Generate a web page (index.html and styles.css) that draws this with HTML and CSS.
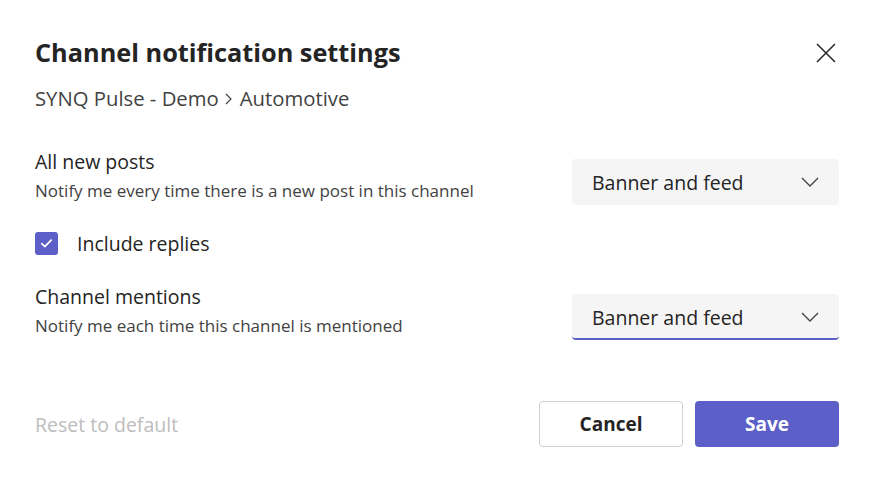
FILE: index.html
```html
<!DOCTYPE html>
<html>
<head>
<meta charset="utf-8">
<link rel="stylesheet" href="styles.css">
</head>
<body>
<div class="dialog">
  <div class="header">
    <h1 class="title">Channel notification settings</h1>
    <button class="close" aria-label="Close">
      <svg width="20" height="20" viewBox="0 0 20 20"><path d="M1 1 L19 19 M19 1 L1 19" stroke="#242424" stroke-width="1.5" fill="none"/></svg>
    </button>
  </div>
  <div class="crumb">SYNQ Pulse - Demo<svg class="sep" width="7" height="12" viewBox="0 0 7 12"><path d="M1 1 L6 6 L1 11" stroke="#424242" stroke-width="1.2" fill="none"/></svg>Automotive</div>

  <div class="setting first">
    <div class="setting-text">
      <div class="label">All new posts</div>
      <div class="desc">Notify me every time there is a new post in this channel</div>
    </div>
    <div class="select">
      <span>Banner and feed</span>
      <svg class="chev" width="18" height="10" viewBox="0 0 18 10"><path d="M1 1 L9 9 L17 1" stroke="#424242" stroke-width="1.3" fill="none"/></svg>
    </div>
  </div>

  <label class="check-row">
    <span class="checkbox">
      <svg width="13" height="11" viewBox="0 0 13 11"><path d="M1.8 5.6 L4.8 8.6 L11.2 2.2" stroke="#fff" stroke-width="1.8" fill="none" stroke-linecap="round" stroke-linejoin="round"/></svg>
    </span>
    <span class="check-label">Include replies</span>
  </label>

  <div class="setting second">
    <div class="setting-text">
      <div class="label">Channel mentions</div>
      <div class="desc">Notify me each time this channel is mentioned</div>
    </div>
    <div class="select focused">
      <span>Banner and feed</span>
      <svg class="chev" width="18" height="10" viewBox="0 0 18 10"><path d="M1 1 L9 9 L17 1" stroke="#424242" stroke-width="1.3" fill="none"/></svg>
    </div>
  </div>

  <div class="footer">
    <span class="reset">Reset to default</span>
    <div class="actions">
      <button class="btn cancel">Cancel</button>
      <button class="btn save">Save</button>
    </div>
  </div>
</div>
</body>
</html>
```
FILE: styles.css
```css
* { box-sizing: border-box; }
html, body { margin: 0; padding: 0; background: #fff; }
body {
  font-family: "Open Sans", "Noto Sans", sans-serif;
  color: #242424;
  width: 876px;
  height: 487px;
  overflow: hidden;
}
.dialog {
  padding: 36px 37px 0 35px;
}
.header {
  display: flex;
  justify-content: space-between;
  align-items: center;
  height: 32px;
}
.title {
  margin: 0;
  font-size: 25.3px;
  line-height: 32px;
  font-weight: 700;
}
.close {
  border: 0;
  background: none;
  padding: 0;
  width: 20px;
  height: 20px;
  margin-right: 3px;
  margin-top: 1px;
  display: flex;
}
.crumb {
  margin-top: 18px;
  font-size: 20.3px;
  line-height: 24px;
  color: #424242;
  display: flex;
  align-items: center;
}
.sep {
  margin: 1px 8px 0 6px;
  display: block;
}
.setting {
  display: flex;
  justify-content: space-between;
  align-items: flex-start;
}
.setting.first { margin-top: 40px; }
.setting.second { margin-top: 30px; }
.label {
  font-size: 19.5px;
  line-height: 24px;
}
.desc {
  margin-top: 7px;
  font-size: 17px;
  line-height: 20px;
  color: #424242;
}
.select {
  width: 267px;
  height: 46px;
  margin-top: 9px;
  background: #f5f5f5;
  border-radius: 4px;
  display: flex;
  align-items: center;
  justify-content: space-between;
  padding: 0 20px 0 20px;
  font-size: 19.5px;
  color: #242424;
}
.select.focused {
  border-bottom: 2px solid #5b5fc7;
  padding-top: 2px;
}
.chev { display: block; }
.check-row {
  display: flex;
  align-items: center;
  margin-top: 26px;
  height: 24px;
}
.checkbox {
  width: 23px;
  height: 23px;
  border-radius: 3px;
  background: #5b5fc7;
  display: flex;
  align-items: center;
  justify-content: center;
}
.check-label {
  margin-left: 19px;
  font-size: 19.5px;
}
.footer {
  display: flex;
  justify-content: space-between;
  align-items: center;
  margin-top: 61px;
}
.reset {
  font-size: 19.5px;
  color: #bdbdbd;
}
.actions {
  display: flex;
  gap: 12px;
}
.btn {
  width: 144px;
  height: 46px;
  border-radius: 4px;
  font-family: inherit;
  font-size: 19px;
  font-weight: 700;
}
.cancel {
  background: #fff;
  border: 1px solid #d1d1d1;
  color: #242424;
}
.save {
  background: #5b5fc7;
  border: 0;
  color: #fff;
}
```
